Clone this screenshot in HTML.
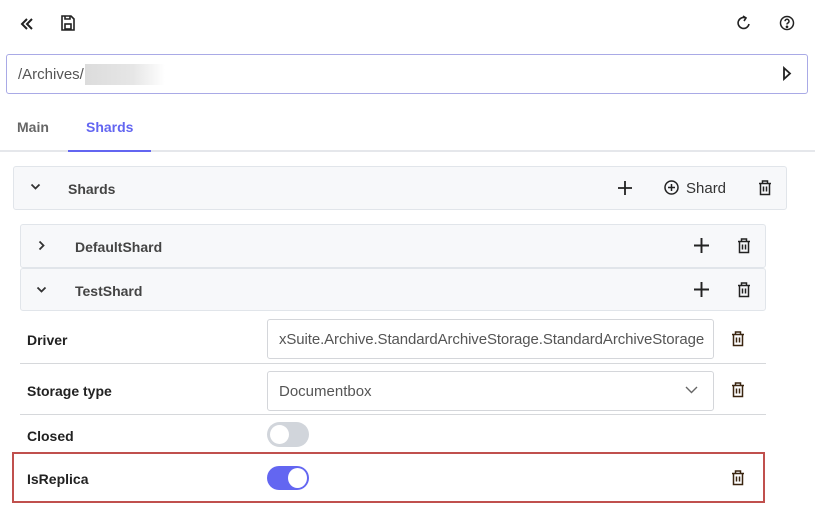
<!DOCTYPE html>
<html><head><style>
*{box-sizing:border-box;margin:0;padding:0}
body{width:815px;height:510px;background:#fff;font-family:"Liberation Sans",sans-serif;position:relative;overflow:hidden;color:#222}
.a{position:absolute}
.b{font-weight:bold;font-size:14px}
.panel{position:absolute;background:#f7f8fa;border:1px solid #e1e5ea;border-radius:3px}
svg{position:absolute}
</style></head><body>
<svg style="left:19px;top:16px" width="16" height="16" viewBox="0 0 16 16" fill="none" stroke="#222" stroke-width="2"><path d="M8 3L3 8l5 5M13 3L8 8l5 5"/></svg>
<svg style="left:61px;top:15px" width="14" height="16" viewBox="0 0 14 16" fill="none" stroke="#222" stroke-width="1.6"><path d="M1 1h9l3 3v11H1z"/><rect x="4" y="9" width="6" height="5"/><path d="M4 1v3h5V1"/></svg>
<svg style="left:737px;top:15px" width="14" height="17" viewBox="0 0 14 17" fill="none" stroke="#222" stroke-width="1.6"><path d="M9 3A5.5 5.5 0 1 0 12 9"/><path d="M6 1l3 2-2 3"/></svg>
<svg style="left:779px;top:15px" width="16" height="16" viewBox="0 0 16 16" fill="none" stroke="#222" stroke-width="1.5"><circle cx="8" cy="8" r="6.5"/><path d="M6 6.2a2 2 0 1 1 2.5 2c-.5.2-.5.7-.5 1.3"/><circle cx="8" cy="11.8" r=".6" fill="#222"/></svg>
<div class="a" style="left:6px;top:54px;width:802px;height:40px;border:1px solid #a9aae6;border-radius:3px"></div>
<div class="a" style="left:18px;top:66px;font-size:15px;color:#555">/Archives/</div>
<div class="a" style="left:85px;top:64px;width:80px;height:21px;background:linear-gradient(90deg,#dcdcdc,#e6e6e6 60%,#fff)"></div>
<svg style="left:782px;top:66px" width="10" height="15" viewBox="0 0 10 15" fill="none" stroke="#222" stroke-width="1.8"><path d="M2 2l6 5.5L2 13z"/></svg>
<div class="a b" style="left:17px;top:119px;color:#666">Main</div>
<div class="a b" style="left:86px;top:119px;color:#6366f1">Shards</div>
<div class="a" style="left:0;top:150px;width:815px;height:2px;background:#e5e7eb"></div>
<div class="a" style="left:68px;top:150px;width:83px;height:2px;background:#6366f1"></div>
<div class="panel" style="left:13px;top:166px;width:774px;height:44px"></div>
<svg style="left:30px;top:183px" width="11" height="8" viewBox="0 0 11 8" fill="none" stroke="#333" stroke-width="1.8"><path d="M1.5 1.5l4 4 4-4"/></svg>
<div class="a b" style="left:68px;top:181px;color:#444">Shards</div>
<svg style="left:618px;top:181px" width="14" height="14" viewBox="0 0 14 14" stroke="#222" stroke-width="1.8"><path d="M7 0v14M0 7h14"/></svg>
<svg style="left:664px;top:180px" width="15" height="15" viewBox="0 0 15 15" fill="none" stroke="#222" stroke-width="1.5"><circle cx="7.5" cy="7.5" r="6.5"/><path d="M7.5 4v7M4 7.5h7"/></svg>
<div class="a" style="left:686px;top:180px;font-size:15px;color:#333">Shard</div>
<div class="panel" style="left:20px;top:224px;width:746px;height:44px"></div>
<div class="panel" style="left:20px;top:268px;width:746px;height:43px"></div>
<svg style="left:38px;top:240px" width="8" height="11" viewBox="0 0 8 11" fill="none" stroke="#333" stroke-width="1.8"><path d="M1.5 1.5l4 4-4 4"/></svg>
<div class="a b" style="left:75px;top:239px;color:#444">DefaultShard</div>
<svg style="left:36px;top:286px" width="11" height="8" viewBox="0 0 11 8" fill="none" stroke="#333" stroke-width="1.8"><path d="M1.5 1.5l4 4 4-4"/></svg>
<div class="a b" style="left:75px;top:283px;color:#444">TestShard</div>
<svg style="left:694px;top:238px" width="15" height="15" viewBox="0 0 14 14" stroke="#222" stroke-width="1.8"><path d="M7 0v14M0 7h14"/></svg>
<svg style="left:694px;top:282px" width="15" height="15" viewBox="0 0 14 14" stroke="#222" stroke-width="1.8"><path d="M7 0v14M0 7h14"/></svg>
<div class="a b" style="left:27px;top:332px">Driver</div>
<div class="a" style="left:267px;top:319px;width:447px;height:40px;border:1px solid #d4d6da;border-radius:3px;overflow:hidden;white-space:nowrap;font-size:15px;color:#555;padding:11px 0 0 11px;letter-spacing:-0.1px">xSuite.Archive.StandardArchiveStorage.StandardArchiveStorage</div>
<div class="a" style="left:20px;top:363px;width:746px;height:1px;background:#d6d8db"></div>
<div class="a b" style="left:27px;top:383px">Storage type</div>
<div class="a" style="left:267px;top:371px;width:447px;height:40px;border:1px solid #d4d6da;border-radius:3px;font-size:15px;color:#555;padding:11px 0 0 11px">Documentbox</div>
<svg style="left:685px;top:386px" width="13" height="8" viewBox="0 0 13 8" fill="none" stroke="#666" stroke-width="1.4"><path d="M1 1l5.5 5.5L12 1"/></svg>
<div class="a" style="left:20px;top:414px;width:746px;height:1px;background:#d6d8db"></div>
<div class="a b" style="left:27px;top:428px">Closed</div>
<div class="a" style="left:267px;top:422px;width:42px;height:25px;border-radius:13px;background:#d1d5db"></div>
<div class="a" style="left:270px;top:425px;width:19px;height:19px;border-radius:50%;background:#fff"></div>
<div class="a" style="left:12px;top:452px;width:753px;height:51px;border:2px solid #c0504d"></div>
<div class="a b" style="left:27px;top:471px">IsReplica</div>
<div class="a" style="left:267px;top:466px;width:42px;height:24px;border-radius:12px;background:#6366f1"></div>
<div class="a" style="left:288px;top:468px;width:19px;height:20px;border-radius:50%;background:#fff"></div>
<svg style="left:758px;top:180px" width="14" height="16" viewBox="0 0 14 16" fill="none" stroke="#222" stroke-width="1.5"><path d="M1 3.5h12M4.5 3.5V1h5v2.5M2.5 3.5v11h9v-11M5.5 6.5v5M8.5 6.5v5"/></svg>
<svg style="left:737px;top:238px" width="14" height="16" viewBox="0 0 14 16" fill="none" stroke="#222" stroke-width="1.5"><path d="M1 3.5h12M4.5 3.5V1h5v2.5M2.5 3.5v11h9v-11M5.5 6.5v5M8.5 6.5v5"/></svg>
<svg style="left:737px;top:282px" width="14" height="16" viewBox="0 0 14 16" fill="none" stroke="#222" stroke-width="1.5"><path d="M1 3.5h12M4.5 3.5V1h5v2.5M2.5 3.5v11h9v-11M5.5 6.5v5M8.5 6.5v5"/></svg>
<svg style="left:731px;top:331px" width="14" height="16" viewBox="0 0 14 16" fill="none" stroke="#3a2510" stroke-width="1.5"><path d="M1 3.5h12M4.5 3.5V1h5v2.5M2.5 3.5v11h9v-11M5.5 6.5v5M8.5 6.5v5"/></svg>
<svg style="left:731px;top:382px" width="14" height="16" viewBox="0 0 14 16" fill="none" stroke="#3a2510" stroke-width="1.5"><path d="M1 3.5h12M4.5 3.5V1h5v2.5M2.5 3.5v11h9v-11M5.5 6.5v5M8.5 6.5v5"/></svg>
<svg style="left:731px;top:470px" width="14" height="16" viewBox="0 0 14 16" fill="none" stroke="#3a2510" stroke-width="1.5"><path d="M1 3.5h12M4.5 3.5V1h5v2.5M2.5 3.5v11h9v-11M5.5 6.5v5M8.5 6.5v5"/></svg>
</body></html>
